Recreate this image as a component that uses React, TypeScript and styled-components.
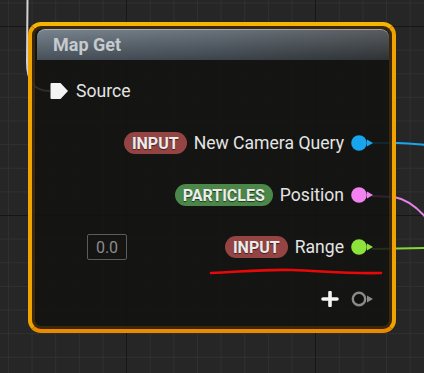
import React from "react";
import styled, { createGlobalStyle } from "styled-components";

const GlobalStyle = createGlobalStyle`
  html, body {
    margin: 0;
    padding: 0;
    background: #262626;
  }
  body {
    font-family: Roboto, "Noto Sans", "Liberation Sans", sans-serif;
  }
`;

interface OutputPin {
  badge: string;
  kind: "input" | "particles";
  label: string;
  color: string;
  value?: string;
}

const outputs: OutputPin[] = [
  { badge: "INPUT", kind: "input", label: "New Camera Query", color: "#19a4ee" },
  { badge: "PARTICLES", kind: "particles", label: "Position", color: "#f282f2" },
  { badge: "INPUT", kind: "input", label: "Range", color: "#8ee23c", value: "0.0" },
];

const PinDot: React.FC<{ color: string; hollow?: boolean }> = ({ color, hollow }) => (
  <svg width="23" height="16" viewBox="0 0 23 16">
    {hollow ? (
      <circle cx="8" cy="8" r="6.2" fill="#111" stroke={color} strokeWidth="2.4" />
    ) : (
      <circle cx="8" cy="8" r="7.8" fill={color} />
    )}
    <path d="M16 4.5 L22 8 L16 11.5 Z" fill={color} />
  </svg>
);

const ExecPin = () => (
  <svg width="19" height="18" viewBox="0 0 19 18">
    <path
      d="M1.5 1 H10.5 L18 9 L10.5 17 H1.5 Q0.5 17 0.5 16 V2 Q0.5 1 1.5 1 Z"
      fill="#f4f4f4"
    />
  </svg>
);

const PlusIcon = () => (
  <svg width="18" height="16" viewBox="0 0 18 16">
    <path d="M9 1.5 V14.5 M2 8 H16" stroke="#f4f4f4" strokeWidth="3.6" strokeLinecap="round" />
  </svg>
);

const App: React.FC = () => {
  return (
    <>
      <GlobalStyle />
      <Canvas>
        <Wires width="424" height="373" viewBox="0 0 424 373">
          <path d="M27.5 0 L27 62 C27 82 34 91 50 91" stroke="#d2d2d2" />
          <path d="M372 143 L398 143 C408 143 416 144 426 145" stroke="#1aa6ee" />
          <path d="M372 196 L394 197 C406 199 418 208 428 220" stroke="#e483e4" />
          <path d="M372 249 L426 248" stroke="#86d838" />
        </Wires>
        <Node>
          <Header>Map Get</Header>
          <Rows>
            <Row>
              <ExecPin />
              <Label $gap={7}>Source</Label>
            </Row>
            {outputs.map((pin, i) => (
              <Row key={i} $right>
                {pin.value && <ValueBox>{pin.value}</ValueBox>}
                <Badge $kind={pin.kind}>{pin.badge}</Badge>
                <Label>{pin.label}</Label>
                <PinSlot>
                  <PinDot color={pin.color} />
                </PinSlot>
              </Row>
            ))}
            <Row $right>
              <PlusIcon />
              <PinSlot $gap={12}>
                <PinDot color="#8a8a8a" hollow />
              </PinSlot>
            </Row>
          </Rows>
        </Node>
        <Scribble width="424" height="373" viewBox="0 0 424 373">
          <path d="M211 273 C238 272 266 269 292 270 C322 271 350 274 381 273" />
        </Scribble>
      </Canvas>
    </>
  );
};

const Canvas = styled.div`
  position: relative;
  width: 424px;
  height: 373px;
  overflow: hidden;
  box-sizing: border-box;
  padding: 22px 0 0 28px;
  background-color: #262626;
  background-image: linear-gradient(to right, #161616 1px, transparent 1px),
    linear-gradient(to bottom, #161616 1px, transparent 1px),
    linear-gradient(to right, #303030 1px, transparent 1px),
    linear-gradient(to bottom, #303030 1px, transparent 1px);
  background-size: 189px 189px, 189px 189px, 23.625px 23.625px, 23.625px 23.625px;
  background-position: 126px 0, 0 26px, 8px 0, 0 2.4px;
`;

const Wires = styled.svg`
  position: absolute;
  left: 0;
  top: 0;
  fill: none;
  stroke-width: 2;
`;

const Scribble = styled.svg`
  position: absolute;
  left: 0;
  top: 0;
  fill: none;
  stroke: #e80808;
  stroke-width: 2.6;
  stroke-linecap: round;
`;

const Node = styled.div`
  position: relative;
  box-sizing: border-box;
  width: 368px;
  height: 311px;
  border: 4px solid #f0a300;
  border-top-color: #f5b500;
  border-bottom-color: #e98a00;
  border-radius: 13px;
  background: rgba(17, 18, 16, 0.86);
  box-shadow: inset 0 0 0 3px rgba(72, 46, 8, 0.75);
`;

const Header = styled.div`
  margin: 3px 3px 0 5px;
  height: 31px;
  padding: 1px 0 0 16px;
  box-sizing: border-box;
  border-radius: 8px 8px 0 0;
  background: linear-gradient(to bottom, rgba(255, 255, 255, 0.12), rgba(0, 0, 0, 0.3)),
    linear-gradient(to right, #66737f, #58636e 45%, #42474b);
  box-shadow: inset 0 1px 0 rgba(210, 214, 218, 0.55);
  color: #c6cacf;
  font-size: 18px;
  font-weight: 700;
  line-height: 30px;
`;

const Rows = styled.div`
  display: flex;
  flex-direction: column;
  margin-top: 5px;
`;

const Row = styled.div<{ $right?: boolean }>`
  display: flex;
  align-items: center;
  justify-content: ${(p) => (p.$right ? "flex-end" : "flex-start")};
  height: 52px;
  padding: ${(p) => (p.$right ? "0 18px 0 0" : "0 0 0 18px")};
`;

const Label = styled.span<{ $gap?: number }>`
  margin-left: ${(p) => p.$gap ?? 7}px;
  color: #e4e4e4;
  font-size: 17.6px;
  line-height: 20px;
  white-space: nowrap;
`;

const Badge = styled.span<{ $kind: "input" | "particles" }>`
  display: inline-flex;
  align-items: center;
  height: 22px;
  padding: 0 8px;
  border-radius: 11px;
  background: ${(p) => (p.$kind === "input" ? "#954444" : "#4a8748")};
  color: #ececec;
  font-size: 16px;
  font-weight: 700;
  text-shadow: 0 1px 1px rgba(0, 0, 0, 0.6);
`;

const ValueBox = styled.span`
  margin-right: auto;
  margin-left: 55px;
  width: 40px;
  height: 26px;
  box-sizing: border-box;
  display: flex;
  align-items: center;
  justify-content: center;
  border: 1.5px solid #5c5c5c;
  border-radius: 2px;
  color: #8c8c8c;
  font-size: 16px;
`;

const PinSlot = styled.span<{ $gap?: number }>`
  display: flex;
  margin-left: ${(p) => p.$gap ?? 7}px;
`;

export default App;
